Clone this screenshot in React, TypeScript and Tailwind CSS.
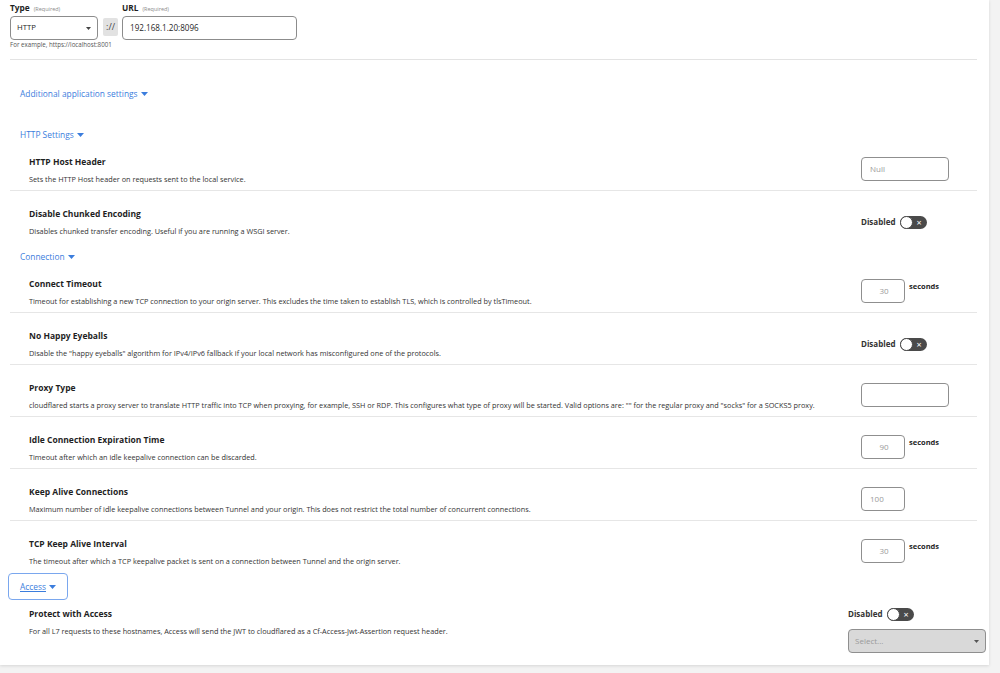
import React from "react";

const font = { fontFamily: '"Open Sans", "Noto Sans", sans-serif' };

function Caret({ className = "" }: { className?: string }) {
  return (
    <svg width="7" height="4" viewBox="0 0 7 4" className={className}>
      <polygon points="0,0 7,0 3.5,4" fill="currentColor" />
    </svg>
  );
}

function SectionButton({ label, active = false }: { label: string; active?: boolean }) {
  return (
    <div className="flex">
      <button
        className={
          "-ml-[2px] h-[27px] px-[11px] pt-[1px] flex items-center gap-[3px] rounded-[4px] border text-[8.4px] text-[#3b7ddd] " +
          (active ? "border-[#7aa7ee]" : "border-transparent")
        }
      >
        <span className={active ? "underline" : ""}>{label}</span>
        <Caret />
      </button>
    </div>
  );
}

function Toggle() {
  return (
    <div className="flex items-center gap-[5px] h-[12px]">
      <span className="text-[8px] font-bold text-[#333]">Disabled</span>
      <div className="w-[27px] h-[13px] rounded-full bg-[#4a4a4a] flex items-center">
        <div className="w-[13px] h-[13px] rounded-full bg-white border border-[#4a4a4a]" />
        <span className="ml-[3px] text-white text-[9px] leading-none">×</span>
      </div>
    </div>
  );
}

type Ctrl =
  | { kind: "input"; value?: string; placeholder?: string; w: number; seconds?: boolean; center?: boolean }
  | { kind: "toggle" };

function Row({
  title,
  desc,
  ctrl,
  first = false,
  last = false,
}: {
  title: string;
  desc: string;
  ctrl: Ctrl;
  first?: boolean;
  last?: boolean;
}) {
  return (
    <div
      className={
        "flex " +
        (first ? "pt-[8px] " : "pt-[17px] ") +
        (last ? "pb-[6px]" : "pb-[5px] border-b border-[#e6e6e6]")
      }
    >
      <div className="flex-1 pl-[19px]">
        <div className="h-[12px] leading-[12px] text-[8.5px] font-bold text-[#1f1f1f]">{title}</div>
        <div className="mt-[5px] h-[12px] leading-[12px] text-[7.3px] text-[#333] whitespace-nowrap">{desc}</div>
      </div>
      <div className="w-[116px]">
        {ctrl.kind === "toggle" ? (
          <div className="mt-[8px]">
            <Toggle />
          </div>
        ) : (
          <div className="mt-[1px] flex items-start gap-[4px]">
            <div
              className={
                "h-[24px] rounded-[4px] border border-[#8f8f8f] flex items-center text-[8px] text-[#9a9a9a] " +
                (ctrl.center ? "justify-center pl-[2px]" : "px-[8px]")
              }
              style={{ width: ctrl.w }}
            >
              {ctrl.value ?? ctrl.placeholder ?? ""}
            </div>
            {ctrl.seconds && (
              <span className="mt-[3px] leading-[8px] text-[7.5px] font-bold text-[#1f1f1f]">seconds</span>
            )}
          </div>
        )}
      </div>
    </div>
  );
}

export default function App() {
  return (
    <div className="w-full h-[673px] bg-[#f3f3f3] overflow-hidden" style={font}>
      <div className="w-[989px] h-[665px] bg-white shadow-[0_1px_3px_rgba(0,0,0,0.12)] pt-[3px] pl-[10px] pr-[12px]">
        {/* Top */}
        <div className="flex">
          <div className="w-[88px]">
            <div className="h-[10px] leading-[10px] flex items-baseline gap-[4px]">
              <span className="text-[8.3px] font-bold text-[#1f1f1f]">Type</span>
              <span className="text-[5.5px] text-[#8a8a8a]">(Required)</span>
            </div>
            <div className="mt-[3px] h-[24px] rounded-[4px] border border-[#8c8c8c] flex items-center justify-between pl-[6px] pr-[6px] text-[7.8px] text-[#1f1f1f]">
              <span>HTTP</span>
              <svg width="5" height="3" viewBox="0 0 5 3" className="text-[#444]">
                <polygon points="0,0 5,0 2.5,3" fill="currentColor" />
              </svg>
            </div>
          </div>
          <div className="ml-[5px] mt-[15px] w-[15px] h-[18px] rounded-[2px] bg-[#e2e2e2] flex items-center justify-center text-[9px] text-[#444]">
            ://
          </div>
          <div className="ml-[4px] w-[175px]">
            <div className="h-[10px] leading-[10px] flex items-baseline gap-[4px]">
              <span className="text-[8.3px] font-bold text-[#1f1f1f]">URL</span>
              <span className="text-[5.5px] text-[#8a8a8a]">(Required)</span>
            </div>
            <div className="mt-[3px] h-[24px] rounded-[4px] border border-[#8c8c8c] flex items-center px-[7px] text-[8.1px] text-[#1f1f1f]">
              192.168.1.20:8096
            </div>
          </div>
        </div>
        <div className="mt-[2px] h-[6px] leading-[6px] text-[6.2px] text-[#555]">For example, https://localhost:8001</div>
        <div className="mt-[11px] border-t border-[#e3e3e3]" />

        <div className="mt-[20px]">
          <SectionButton label="Additional application settings" />
        </div>
        <div className="mt-[14px]">
          <SectionButton label="HTTP Settings" />
        </div>
        <Row
          first
          title="HTTP Host Header"
          desc="Sets the HTTP Host header on requests sent to the local service."
          ctrl={{ kind: "input", placeholder: "Null", w: 88 }}
        />
        <Row
          last
          title="Disable Chunked Encoding"
          desc="Disables chunked transfer encoding. Useful if you are running a WSGI server."
          ctrl={{ kind: "toggle" }}
        />
        <SectionButton label="Connection" />
        <Row
          first
          title="Connect Timeout"
          desc="Timeout for establishing a new TCP connection to your origin server. This excludes the time taken to establish TLS, which is controlled by tlsTimeout."
          ctrl={{ kind: "input", value: "30", w: 44, seconds: true, center: true }}
        />
        <Row
          title="No Happy Eyeballs"
          desc='Disable the "happy eyeballs" algorithm for IPv4/IPv6 fallback if your local network has misconfigured one of the protocols.'
          ctrl={{ kind: "toggle" }}
        />
        <Row
          title="Proxy Type"
          desc={'cloudflared starts a proxy server to translate HTTP traffic into TCP when proxying, for example, SSH or RDP. This configures what type of proxy will be started. Valid options are: "" for the regular proxy and "socks" for a SOCKS5 proxy.'}
          ctrl={{ kind: "input", value: "", w: 88 }}
        />
        <Row
          title="Idle Connection Expiration Time"
          desc="Timeout after which an idle keepalive connection can be discarded."
          ctrl={{ kind: "input", value: "90", w: 44, seconds: true, center: true }}
        />
        <Row
          title="Keep Alive Connections"
          desc="Maximum number of idle keepalive connections between Tunnel and your origin. This does not restrict the total number of concurrent connections."
          ctrl={{ kind: "input", value: "100", w: 44 }}
        />
        <Row
          last
          title="TCP Keep Alive Interval"
          desc="The timeout after which a TCP keepalive packet is sent on a connection between Tunnel and the origin server."
          ctrl={{ kind: "input", value: "30", w: 44, seconds: true, center: true }}
        />
        <SectionButton label="Access" active />
        <div className="flex pt-[8px] -mr-[9px]">
          <div className="flex-1 pl-[19px]">
            <div className="h-[12px] leading-[12px] text-[8.5px] font-bold text-[#1f1f1f]">Protect with Access</div>
            <div className="mt-[5px] h-[12px] leading-[12px] text-[7.3px] text-[#333] whitespace-nowrap">
              For all L7 requests to these hostnames, Access will send the JWT to cloudflared as a Cf-Access-Jwt-Assertion request header.
            </div>
          </div>
          <div className="w-[138px]">
            <Toggle />
            <div className="mt-[9px] h-[24px] rounded-[4px] border border-[#8f8f8f] bg-[#d9d9d9] flex items-center justify-between px-[6px] text-[8px] text-[#9a9a9a]">
              <span>Select...</span>
              <svg width="5" height="3" viewBox="0 0 5 3" className="text-[#555]">
                <polygon points="0,0 5,0 2.5,3" fill="currentColor" />
              </svg>
            </div>
          </div>
        </div>
      </div>
    </div>
  );
}
